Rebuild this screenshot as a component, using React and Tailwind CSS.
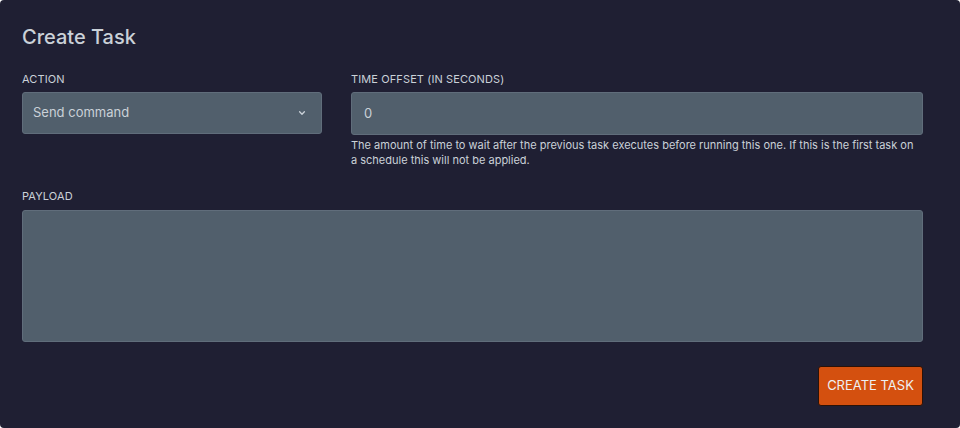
import React from 'react';

const Label = ({ children, className = '' }) => (
  <label className={`block text-[11px] leading-[14px] uppercase text-[#cad1d8] tracking-[0.01em] ${className}`}>
    {children}
  </label>
);

export default function App() {
  return (
    <div className="w-[960px] h-[428px] bg-white" style={{ fontFamily: 'Inter, "Liberation Sans", sans-serif' }}>
      <div className="w-full h-full rounded-[4px] bg-[#1f1f33] pl-[22px] pr-[37px] pt-[25px]">
        <h2 className="text-[20px] leading-[24px] font-medium text-[#cad1d8]">Create Task</h2>

        <div className="flex mt-[23px]">
          <div className="w-[300px] shrink-0">
            <Label className="mb-[6px]">Action</Label>
            <div className="h-[42px] rounded-[3px] bg-[#515f6c] border border-[#606d7b] flex items-center justify-between pl-[10px] pr-[13px]">
              <span className="text-[13px] text-[#cad1d8]">Send command</span>
              <svg width="12" height="12" viewBox="0 0 20 20" fill="none" className="text-[#cad1d8]">
                <path d="M6 8l4 4 4-4" stroke="currentColor" strokeWidth="2.2" strokeLinecap="round" strokeLinejoin="round" />
              </svg>
            </div>
          </div>
          <div className="flex-1 ml-[29px]">
            <Label className="mb-[6px]">Time offset (in seconds)</Label>
            <div className="h-[43px] rounded-[3px] bg-[#515f6c] border border-[#606d7b] flex items-center px-[12px]">
              <span className="text-[13px] text-[#cad1d8]">0</span>
            </div>
            <p className="mt-[3px] pr-[5px] text-[11px] leading-[15px] text-[#cad1d8]">
              The amount of time to wait after the previous task executes before running this one. If this is the first task on a schedule this will not be applied.
            </p>
          </div>
        </div>

        <div className="mt-[21px]">
          <Label className="mb-[7px]">Payload</Label>
          <div className="h-[132px] rounded-[3px] bg-[#515f6c] border border-[#606d7b]" />
        </div>

        <div className="flex justify-end mt-[24px]">
          <button className="h-[40px] w-[105px] rounded-[3px] bg-[#d4500f] border border-[#2a1208] text-[13px] text-[#eef0f2] uppercase">
            Create Task
          </button>
        </div>
      </div>
    </div>
  );
}
